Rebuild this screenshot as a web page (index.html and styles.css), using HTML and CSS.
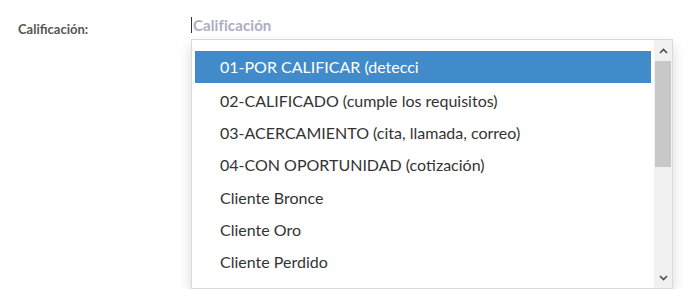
FILE: index.html
```html
<!DOCTYPE html>
<html lang="es">
<head>
    <meta charset="UTF-8">
    <title>Calificación</title>
    <link rel="stylesheet" href="styles.css">
</head>
<body>
    <div class="field">
        <label class="field-label" for="calificacion">Calificación:</label>
        <div class="field-control">
            <div class="select-input">
                <span class="caret"></span>
                <span class="placeholder">Calificación</span>
            </div>

            <!-- lista desplegable -->
            <div class="dropdown">
                <ul class="options">
                    <li class="option selected">01-POR CALIFICAR (detecci</li>
                    <li class="option">02-CALIFICADO (cumple los requisitos)</li>
                    <li class="option">03-ACERCAMIENTO (cita, llamada, correo)</li>
                    <li class="option">04-CON OPORTUNIDAD (cotización)</li>
                    <li class="option">Cliente Bronce</li>
                    <li class="option">Cliente Oro</li>
                    <li class="option">Cliente Perdido</li>
                </ul>
                <div class="scrollbar">
                    <div class="scroll-btn">
                        <svg width="9" height="6" viewBox="0 0 9 6"><polyline points="1,5 4.5,1.5 8,5" fill="none" stroke="#505050" stroke-width="1.7"/></svg>
                    </div>
                    <div class="scroll-track">
                        <div class="scroll-thumb"></div>
                    </div>
                    <div class="scroll-btn">
                        <svg width="9" height="6" viewBox="0 0 9 6"><polyline points="1,1 4.5,4.5 8,1" fill="none" stroke="#505050" stroke-width="1.7"/></svg>
                    </div>
                </div>
            </div>
        </div>
    </div>
</body>
</html>
```

FILE: styles.css
```css
body {
    margin: 0;
    padding: 0;
    font-family: 'Lato', 'Liberation Sans', sans-serif;
    background-color: #fff;
    color: #333;
}

.field {
    display: flex;
    padding: 14px 0 0 18px;
}

.field-label {
    width: 173px;
    padding-top: 7px;
    font-size: 13px;
    font-weight: bold;
    color: #555;
}

.field-control {
    width: 482px;
}

.select-input {
    display: flex;
    align-items: center;
    height: 25px;
}

.caret {
    display: block;
    width: 1px;
    height: 16px;
    margin-top: -3px;
    background-color: #333;
}

.placeholder {
    margin-left: 1px;
    margin-top: -4px;
    font-size: 15px;
    font-weight: bold;
    letter-spacing: 0.1px;
    color: #adadc2;
}

.dropdown {
    display: flex;
    height: 248px;
    border: 1px solid #d9d9d9;
    background-color: #fff;
    box-shadow: 0 6px 12px rgba(0, 0, 0, 0.15);
}

.options {
    flex: 1;
    margin: 0;
    padding: 11px 3px 0 3px;
    list-style: none;
    overflow: hidden;
}

.option {
    height: 32.2px;
    line-height: 32px;
    padding-left: 25px;
    font-size: 16px;
    color: #333;
    white-space: nowrap;
}

.option.selected {
    height: 32px;
    line-height: 32px;
    margin-bottom: 2px;
    background-color: #428bca;
    color: #fff;
}

.scrollbar {
    display: flex;
    flex-direction: column;
    width: 18px;
    background-color: #f1f1f1;
}

.scroll-btn {
    display: flex;
    align-items: center;
    justify-content: center;
    height: 21px;
}

.scroll-track {
    flex: 1;
}

.scroll-thumb {
    height: 106px;
    margin: 0 1px;
    background-color: #c8c8c8;
}
```
